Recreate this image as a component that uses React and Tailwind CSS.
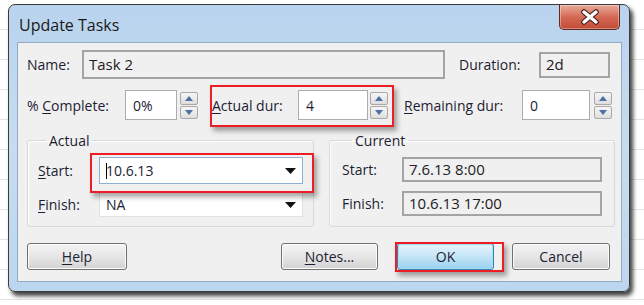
import React from 'react';

// Spinner buttons next to the numeric fields
const Spinner = ({ className = '' }) => (
  <div className={`flex flex-col gap-[1px] ${className}`}>
    {['up', 'down'].map((dir) => (
      <div
        key={dir}
        className="w-[18px] h-[13px] border border-[#a9a9a9] rounded-[2px] bg-gradient-to-b from-[#f6f6f6] to-[#dedede] flex items-center justify-center"
      >
        <svg width="8" height="5" viewBox="0 0 8 5">
          {dir === 'up' ? (
            <polygon points="4,0 8,5 0,5" fill="#4b6fa6" />
          ) : (
            <polygon points="0,0 8,0 4,5" fill="#4b6fa6" />
          )}
        </svg>
      </div>
    ))}
  </div>
);

const Arrow = () => (
  <svg width="11" height="6" viewBox="0 0 11 6" className="mr-[6px]">
    <polygon points="0,0 11,0 5.5,6" fill="#111" />
  </svg>
);

const U = ({ children }) => <span className="underline underline-offset-2">{children}</span>;

const Btn = ({ children, className = '', primary = false }) => (
  <div
    className={`h-[27px] flex items-center justify-center rounded-[3px] border text-[14px] ${
      primary
        ? 'border-[#3c7fb1] bg-gradient-to-b from-[#e5f4fc] via-[#c4e5f6] to-[#98d1ef] shadow-[inset_0_0_0_1px_#9ee0f5]'
        : 'border-[#707070] bg-gradient-to-b from-[#f4f4f4] via-[#e6e6e6] to-[#d3d3d3] shadow-[inset_0_0_0_1px_#fbfbfb]'
    } ${className}`}
  >
    {children}
  </div>
);

const RedBox = ({ className }) => (
  <div
    className={`absolute border-2 border-[#ee1c24] shadow-[3px_4px_5px_rgba(0,0,0,0.35)] pointer-events-none ${className}`}
  />
);

export default function App() {
  return (
    <div className="relative w-[644px] h-[305px] overflow-hidden bg-white bg-[repeating-linear-gradient(180deg,transparent_0px,transparent_29px,#e4e4e4_29px,#e4e4e4_30px)] font-['Open_Sans',sans-serif] text-[#1d1d33]">
      <div className="ml-[8px] mt-[4px] w-[622px] h-[288px] rounded-[7px] border border-[#3b3b3b] bg-gradient-to-b from-[#b9d3ee] via-[#c7dcf1] to-[#bcd6ef] shadow-[3px_4px_4px_rgba(0,0,0,0.75)] flex flex-col pl-[8px] pr-[7px] pb-[9px]">
        {/* Title bar */}
        <div className="h-[37px] flex items-start justify-between">
          <div className="pt-[8px] pl-[2px] text-[16px] text-[#1a1a1a]">Update Tasks</div>
          <div className="mr-[2px] w-[61px] h-[25px] rounded-b-[5px] border border-t-0 border-[#5b2a22] bg-gradient-to-b from-[#e9aa9c] via-[#d46a55] to-[#c24a35] shadow-[inset_0_0_0_1px_rgba(255,255,255,0.35)] flex items-center justify-center">
            <svg width="20" height="16" viewBox="0 0 20 16">
              <path d="M4 3 L16 13 M16 3 L4 13" stroke="#3a1a14" strokeWidth="5.5" strokeLinecap="round" />
              <path d="M4 3 L16 13 M16 3 L4 13" stroke="#ffffff" strokeWidth="3.5" strokeLinecap="round" />
            </svg>
          </div>
        </div>

        {/* Client area */}
        <div className="flex-1 border border-[#94aac2] bg-[#f0f0f0] pl-[9px] pt-[7px] text-[14px]">
          {/* Name row */}
          <div className="flex items-center h-[29px]">
            <div className="w-[55px]">Name:</div>
            <div className="w-[363px] h-[29px] border-2 border-[#a4a4a4] flex items-center pl-[5px] text-[15px] text-[#231a26]">
              Task 2
            </div>
            <div className="ml-[14px] w-[80px]">Duration:</div>
            <div className="w-[71px] h-[26px] border-2 border-[#a4a4a4] flex items-center pl-[5px] text-[15px] text-[#231a26]">
              2d
            </div>
          </div>

          {/* Complete / durations row */}
          <div className="flex items-center h-[30px] mt-[11px]">
            <div className="w-[98px]">
              % <U>C</U>omplete:
            </div>
            <div className="w-[52px] h-[30px] bg-white border border-[#acacac] flex items-center pl-[7px]">0%</div>
            <Spinner className="ml-[3px]" />
            <div className="ml-[14px] w-[86px]">
              <U>A</U>ctual dur:
            </div>
            <div className="w-[70px] h-[30px] bg-white border border-[#acacac] flex items-center pl-[7px]">4</div>
            <Spinner className="ml-[2px]" />
            <div className="ml-[16px] w-[118px]">
              <U>R</U>emaining dur:
            </div>
            <div className="w-[68px] h-[30px] bg-white border border-[#acacac] flex items-center pl-[7px]">0</div>
            <Spinner className="ml-[4px]" />
          </div>

          {/* Groups */}
          <div className="flex mt-[11px]">
            <fieldset className="w-[285px] h-[96px] border border-[#d8d8d8] rounded-[3px] shadow-[inset_1px_1px_0_#fff] px-[10px]">
              <legend className="ml-[8px] px-[3px] leading-[19px]">Actual</legend>
              <div className="flex items-center h-[27px] mt-[7px]">
                <div className="w-[61px]">
                  <U>S</U>tart:
                </div>
                <div className="w-[204px] h-[27px] bg-white border border-[#8fb0d3] flex items-center justify-between pl-[6px]">
                  <span className="flex items-center">
                    <span className="w-[1px] h-[16px] bg-black mr-[-1px]" />
                    10.6.13
                  </span>
                  <Arrow />
                </div>
              </div>
              <div className="flex items-center h-[25px] mt-[8px]">
                <div className="w-[61px]">
                  <U>F</U>inish:
                </div>
                <div className="w-[204px] h-[25px] bg-white border border-[#e2e2e2] flex items-center justify-between pl-[6px]">
                  NA
                  <Arrow />
                </div>
              </div>
            </fieldset>

            <fieldset className="ml-[15px] w-[282px] h-[96px] border border-[#d8d8d8] rounded-[3px] shadow-[inset_1px_1px_0_#fff] px-[12px]">
              <legend className="ml-[10px] px-[3px] leading-[19px]">Current</legend>
              <div className="flex items-center h-[25px] mt-[7px]">
                <div className="w-[60px]">Start:</div>
                <div className="w-[200px] h-[25px] border-2 border-[#a4a4a4] flex items-center pl-[5px] text-[15px] text-[#231a26]">
                  7.6.13 8:00
                </div>
              </div>
              <div className="flex items-center h-[25px] mt-[9px]">
                <div className="w-[60px]">Finish:</div>
                <div className="w-[200px] h-[25px] border-2 border-[#a4a4a4] flex items-center pl-[5px] text-[15px] text-[#231a26]">
                  10.6.13 17:00
                </div>
              </div>
            </fieldset>
          </div>

          {/* Buttons */}
          <div className="flex mt-[16px]">
            <Btn className="w-[100px]">
              <U>H</U>elp
            </Btn>
            <Btn className="ml-[154px] w-[97px]">
              <U>N</U>otes...
            </Btn>
            <Btn primary className="ml-[19px] w-[97px]">
              OK
            </Btn>
            <Btn className="ml-[18px] w-[98px]">Cancel</Btn>
          </div>
        </div>
      </div>

      <RedBox className="left-[210px] top-[85px] w-[184px] h-[42px]" />
      <RedBox className="left-[90px] top-[153px] w-[224px] h-[40px]" />
      <RedBox className="left-[395px] top-[242px] w-[109px] h-[30px]" />
    </div>
  );
}
